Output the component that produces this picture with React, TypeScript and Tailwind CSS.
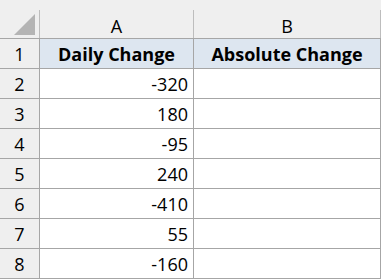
const rows: [number, string][] = [
  [2, "-320"],
  [3, "180"],
  [4, "-95"],
  [5, "240"],
  [6, "-410"],
  [7, "55"],
  [8, "-160"],
];

const font = { fontFamily: '"Open Sans", "Liberation Sans", sans-serif' };

export default function App() {
  return (
    <div className="w-[382px] h-[280px] bg-white text-[18px] text-black overflow-hidden" style={font}>
      {/* column header row */}
      <div className="flex h-[39px] bg-[#efefef] border-b border-[#a6a6a6] w-[381px]">
        <div className="w-[40px] shrink-0 flex flex-col">
          <div className="h-[10px]" />
          <div className="flex-1 border-r border-[#bdbdbd] flex items-end justify-end pr-[3px] pb-[2px]">
            <svg width="22" height="22" viewBox="0 0 22 22">
              <polygon points="21,0 21,21 0,21" fill="#b4b4b4" />
            </svg>
          </div>
        </div>
        <div className="w-[154px] shrink-0 flex flex-col">
          <div className="h-[10px]" />
          <div className="flex-1 border-r border-[#bdbdbd] flex items-center justify-center leading-none pt-[3px]">A</div>
        </div>
        <div className="w-[187px] shrink-0 flex flex-col">
          <div className="h-[10px]" />
          <div className="flex-1 border-r border-[#bdbdbd] flex items-center justify-center leading-none pt-[3px]">B</div>
        </div>
      </div>

      {/* row 1: headers */}
      <div className="flex h-[30px] w-[381px] border-b border-[#a6a6a6]">
        <div className="w-[40px] shrink-0 bg-[#efefef] border-r border-[#a6a6a6] flex items-center justify-center leading-none">1</div>
        <div className="w-[154px] shrink-0 bg-[#dde6f0] border-r border-[#a6a6a6] flex items-center justify-center font-bold leading-none">
          Daily Change
        </div>
        <div className="w-[187px] shrink-0 bg-[#dde6f0] border-r border-[#a6a6a6] flex items-center justify-center font-bold leading-none">
          Absolute Change
        </div>
      </div>

      {rows.map(([n, v]) => (
        <div key={n} className="flex h-[30px] w-[381px] border-b border-[#a6a6a6]">
          <div className="w-[40px] shrink-0 bg-[#efefef] border-r border-[#a6a6a6] flex items-center justify-center leading-none">
            {n}
          </div>
          <div className="w-[154px] shrink-0 border-r border-[#a6a6a6] flex items-center justify-end pr-[5px] leading-none">
            {v}
          </div>
          <div className="w-[187px] shrink-0 border-r border-[#a6a6a6]" />
        </div>
      ))}
    </div>
  );
}
